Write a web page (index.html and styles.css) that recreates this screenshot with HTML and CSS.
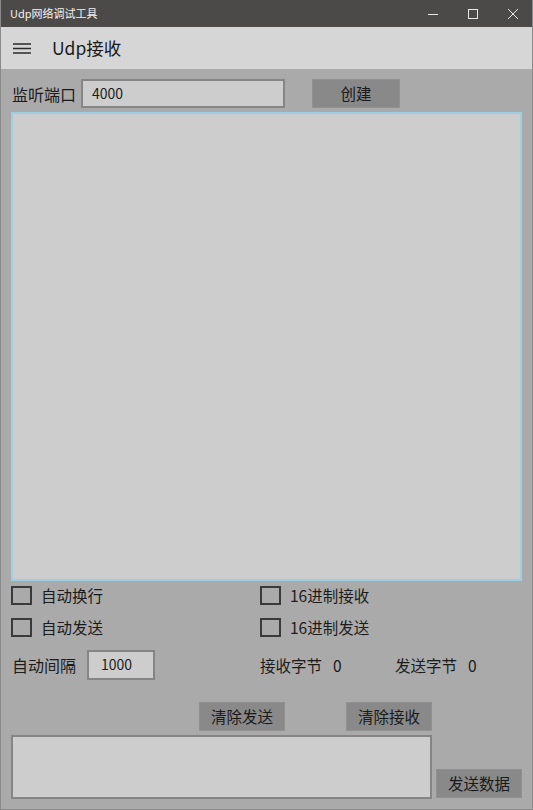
FILE: index.html
```html
<!DOCTYPE html>
<html lang="zh-CN">
  <head>
    <meta charset="UTF-8" />
    <meta name="viewport" content="width=device-width, initial-scale=1.0" />
    <title>Udp网络调试工具</title>
    <link rel="stylesheet" href="styles.css">
  </head>
  <body>
    <div class="window">
      <div class="titlebar">
        <span class="app-title">Udp网络调试工具</span>
        <div class="win-controls">
          <span class="win-btn">
            <svg width="12" height="12" viewBox="0 0 12 12"><path d="M1 6.5h10" stroke="#e8e8e8" stroke-width="1"/></svg>
          </span>
          <span class="win-btn">
            <svg width="12" height="12" viewBox="0 0 12 12"><rect x="1.5" y="1.5" width="9" height="9" fill="none" stroke="#e8e8e8" stroke-width="1"/></svg>
          </span>
          <span class="win-btn">
            <svg width="12" height="12" viewBox="0 0 12 12"><path d="M1 1l10 10M11 1L1 11" stroke="#e8e8e8" stroke-width="1"/></svg>
          </span>
        </div>
      </div>

      <div class="header">
        <svg class="menu-icon" width="18" height="12" viewBox="0 0 18 12">
          <path d="M0 1h18M0 5.5h18M0 10h18" stroke="#2b2b2b" stroke-width="1.3"/>
        </svg>
        <span class="page-title">Udp接收</span>
      </div>

      <div class="content">
        <div class="port-row">
          <span class="label">监听端口</span>
          <div class="field port-field">4000</div>
          <div class="btn create-btn">创建</div>
        </div>

        <div class="recv-box"></div>

        <div class="two-col checks">
          <label class="check"><span class="box"></span>自动换行</label>
          <label class="check"><span class="box"></span>16进制接收</label>
          <label class="check"><span class="box"></span>自动发送</label>
          <label class="check"><span class="box"></span>16进制发送</label>
        </div>

        <div class="two-col interval-row">
          <div class="interval">
            <span class="label">自动间隔</span>
            <div class="field interval-field">1000</div>
          </div>
          <div class="counters">
            <span class="counter">接收字节<b>0</b></span>
            <span class="counter">发送字节<b>0</b></span>
          </div>
        </div>

        <div class="clear-row">
          <div class="btn">清除发送</div>
          <div class="btn">清除接收</div>
        </div>

        <div class="send-row">
          <div class="send-box"></div>
          <div class="btn send-btn">发送数据</div>
        </div>
      </div>
    </div>
  </body>
</html>
```

FILE: styles.css
```css
body {
  margin: 0;
  background-color: #aaaaaa;
  font-family: "Noto Sans CJK SC", "Noto Sans", sans-serif;
  color: #1c1c1c;
}

.window {
  width: 533px;
  height: 810px;
  box-sizing: border-box;
  border: 1px solid #8a8a8a;
  border-top: none;
  background-color: #aaaaaa;
  overflow: hidden;
}

.titlebar {
  height: 27px;
  background-color: #4b4a48;
  display: flex;
  align-items: center;
  justify-content: space-between;
  margin: 0 -1px;
}

.app-title {
  color: #f2f2f2;
  font-size: 11px;
  line-height: 27px;
  padding-left: 10px;
}

.win-controls {
  display: flex;
  height: 27px;
}

.win-btn {
  width: 40px;
  display: flex;
  align-items: center;
  justify-content: center;
}

.header {
  height: 42px;
  background-color: #d6d6d6;
  display: flex;
  align-items: center;
  margin: 0 -1px;
}

.menu-icon {
  margin-left: 13px;
  margin-top: 1px;
}

.page-title {
  font-size: 17.5px;
  line-height: 24px;
  margin-left: 21px;
  color: #1a1a1a;
}

.content {
  padding: 10px 10px 0 10px;
}

.label {
  font-size: 16px;
  line-height: 20px;
}

.field {
  box-sizing: border-box;
  border: 2px solid #858585;
  background-color: #cdcdcd;
  font-size: 14px;
  line-height: 25px;
  height: 29px;
  color: #1c1c1c;
}

.btn {
  box-sizing: border-box;
  height: 29px;
  width: 86px;
  background-color: #898989;
  border: 1px solid #909090;
  font-size: 15.5px;
  line-height: 27px;
  text-align: center;
  color: #1a1a1a;
}

.port-row {
  display: flex;
  align-items: center;
  padding-left: 1px;
}

.port-field {
  width: 204px;
  margin-left: 5px;
  padding-left: 9px;
}

.create-btn {
  width: 88px;
  margin-left: 27px;
}

.recv-box {
  box-sizing: border-box;
  margin-top: 4px;
  width: 511px;
  height: 469px;
  border: 2px solid #9ccfe2;
  background-color: #cdcdcd;
}

.two-col {
  display: grid;
  grid-template-columns: 249px 1fr;
}

.checks {
  margin-top: 4px;
  row-gap: 12px;
}

.check {
  display: flex;
  align-items: center;
  font-size: 15.5px;
  line-height: 20px;
  height: 20px;
}

.box {
  box-sizing: border-box;
  width: 21px;
  height: 19px;
  border: 2px solid #3a3a3a;
  margin-right: 9px;
}

.interval-row {
  margin-top: 13px;
  align-items: center;
}

.interval {
  display: flex;
  align-items: center;
  padding-left: 1px;
}

.interval-field {
  width: 68px;
  height: 30px;
  margin-left: 11px;
  padding-left: 12px;
}

.counters {
  display: flex;
  font-size: 15.5px;
  line-height: 20px;
}

.counter {
  width: 135px;
}

.counter b {
  font-weight: normal;
  margin-left: 11px;
}

.clear-row {
  display: flex;
  margin-top: 22px;
  padding-left: 188px;
  gap: 61px;
}

.send-row {
  display: flex;
  align-items: flex-end;
  margin-top: 4px;
}

.send-box {
  box-sizing: border-box;
  width: 421px;
  height: 64px;
  border: 2px solid #858585;
  background-color: #cdcdcd;
}

.send-btn {
  margin-left: 4px;
  margin-bottom: 1px;
}
```
